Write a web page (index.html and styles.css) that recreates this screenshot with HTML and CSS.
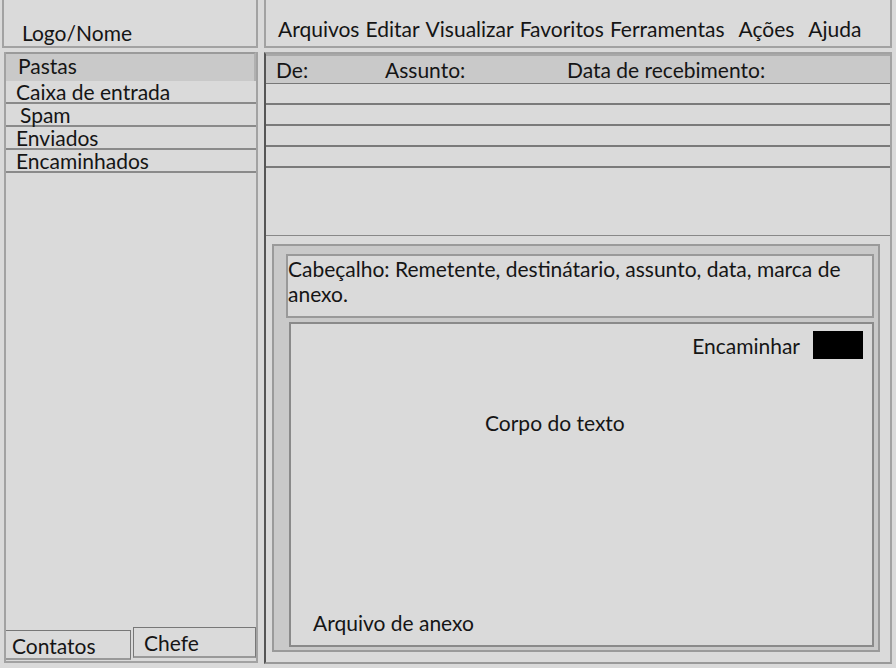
FILE: index.html
```html
<!DOCTYPE html>
<html lang="pt">
<head>
<meta charset="utf-8">
<link rel="stylesheet" href="styles.css">
</head>
<body>
<div class="page">
  <aside class="left">
    <div class="logo">Logo/Nome</div>
    <div class="sidebar">
      <div class="folders-head">Pastas</div>
      <div class="folder f1">Caixa de entrada</div>
      <div class="folder f2">Spam</div>
      <div class="folder f3">Enviados</div>
      <div class="folder f4">Encaminhados</div>
      <div class="spacer"></div>
      <div class="contacts">
        <div class="tab tab-a">Contatos</div>
        <div class="tab tab-b">Chefe</div>
      </div>
    </div>
  </aside>
  <main class="right">
    <nav class="menu">
      <span>Arquivos</span><span>Editar</span><span>Visualizar</span><span>Favoritos</span><span>Ferramentas</span><span class="wide">Ações</span><span class="wide">Ajuda</span>
    </nav>
    <section class="main">
      <div class="list">
        <div class="list-head">
          <span class="c-de">De:</span><span class="c-assunto">Assunto:</span><span class="c-data">Data de recebimento:</span>
        </div>
        <div class="row"></div>
        <div class="row"></div>
        <div class="row"></div>
        <div class="row"></div>
      </div>
      <div class="list-space"></div>
      <div class="message-area">
        <div class="message">
          <div class="msg-head">Cabeçalho: Remetente, destinátario, assunto, data, marca de anexo.</div>
          <div class="msg-body">
            <div class="fwd"><span>Encaminhar</span><span class="fwd-btn"></span></div>
            <div class="body-text">Corpo do texto</div>
            <div class="attach">Arquivo de anexo</div>
          </div>
        </div>
      </div>
    </section>
  </main>
</div>
</body>
</html>
```
FILE: styles.css
```css
* { box-sizing: border-box; }
html, body { margin: 0; padding: 0; }
body {
  background: #dadada;
  font-family: Lato, "Open Sans", sans-serif;
  font-size: 21px;
  color: #151515;
  width: 896px;
  height: 668px;
  overflow: hidden;
}
.page {
  display: flex;
  gap: 6px;
  padding: 0 2px 0 2px;
  height: 668px;
}
.left {
  width: 256px;
  display: flex;
  flex-direction: column;
  gap: 4px;
  padding-bottom: 5px;
}
.logo {
  height: 48px;
  border: 2px solid #a2a2a2;
  border-top: none;
  padding: 21px 0 0 18px;
  line-height: 24px;
}
.sidebar {
  flex: 1;
  margin-left: 2px;
  border: 2px solid #a2a2a2;
  border-top: none;
  display: flex;
  flex-direction: column;
}
.folders-head {
  height: 29px;
  background: #c9c9c9;
  border-top: 2px solid #9a9a9a;
  border-right: 2px solid #b0b0b0;
  padding-left: 12px;
  line-height: 24px;
}
.folder {
  height: 23px;
  border-bottom: 2px solid #8a8a8a;
  line-height: 22px;
  padding-left: 10px;
}
.folder.f2 { padding-left: 14px; }
.spacer { flex: 1; }
.contacts {
  display: flex;
  align-items: flex-end;
  gap: 2px;
  height: 32px;
  margin-bottom: 1px;
}
.tab {
  height: 30px;
  line-height: 30px;
  border: 1px solid #777;
  border-bottom: 2px solid #999;
  padding-left: 6px;
}
.tab-a { width: 126px; height: 30px; border-left: none; padding-left: 6px; }
.tab-b { width: 124px; height: 31px; margin-bottom: 2px; padding-left: 10px; }

.right {
  flex: 1;
  display: flex;
  flex-direction: column;
  gap: 4px;
  padding-right: 2px;
  padding-bottom: 4px;
}
.menu {
  height: 48px;
  border: 2px solid #a2a2a2;
  border-top: none;
  display: flex;
  align-items: center;
  padding: 10px 0 0 12px;
  gap: 6px;
}
.menu .wide { margin-left: 8px; }
.main {
  flex: 1;
  border: 2px solid #a2a2a2;
  border-left: 2px solid #555;
  border-bottom: 2px solid #999;
  display: flex;
  flex-direction: column;
}
.list-head {
  height: 30px;
  background: #c9c9c9;
  border-top: 2px solid #a8a8a8;
  border-bottom: 1px solid #777;
  display: flex;
  align-items: center;
  padding-left: 10px;
}
.c-de { width: 109px; }
.c-assunto { width: 182px; }
.row {
  height: 21px;
  border-bottom: 2px solid #7a7a7a;
}
.list-space {
  height: 68px;
  border-bottom: 1px solid #888;
}
.message-area {
  flex: 1;
  padding: 8px 10px 10px 6px;
}
.message {
  height: 100%;
  background: #c9c9c9;
  border: 2px solid #9a9a9a;
  padding: 8px 4px 3px 12px;
  display: flex;
  flex-direction: column;
  gap: 4px;
}
.msg-head {
  height: 64px;
  background: #dadada;
  border: 2px solid #999;
  padding: 0 30px 0 0;
  line-height: 25px;
}
.msg-body {
  flex: 1;
  background: #dadada;
  border: 2px solid #8a8a8a;
  margin-left: 3px;
  display: flex;
  flex-direction: column;
  padding: 6px 9px 10px 22px;
}
.fwd {
  display: flex;
  justify-content: flex-end;
  align-items: center;
  gap: 13px;
  height: 30px;
}
.fwd-btn {
  width: 50px;
  height: 28px;
  background: #000;
}
.body-text {
  flex: 1;
  padding-top: 50px;
  padding-left: 172px;
}
.attach {
  line-height: 24px;
}
```
